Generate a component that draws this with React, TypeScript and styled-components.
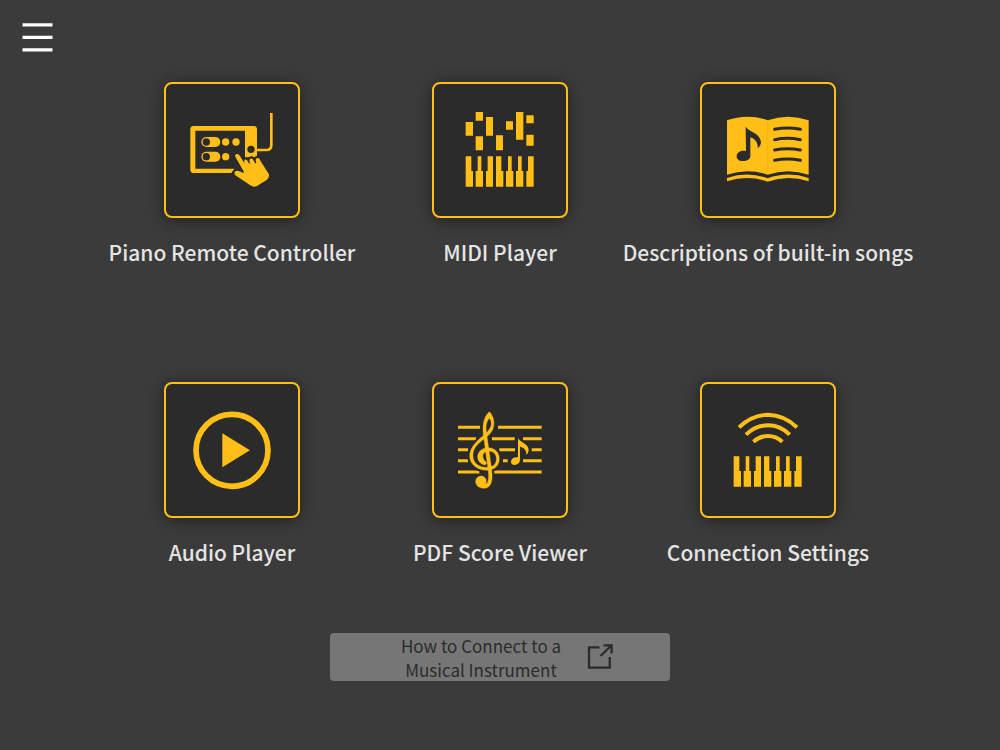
import React from "react";
import styled, { createGlobalStyle } from "styled-components";

const gold = "#ffbf16";
const panel = "#2b2b2b";

const GlobalStyle = createGlobalStyle`
  *, *::before, *::after { box-sizing: border-box; }
  html, body { margin: 0; min-height: 100%; background: #3b3b3b; }
  body { font-family: "Noto Sans CJK JP", "Noto Sans", sans-serif; font-weight: 500; }
`;

const Page = styled.div`
  display: flex;
  flex-direction: column;
  min-height: 100vh;
`;

const Header = styled.header`
  display: flex;
  padding: 22px 22px 30px;
`;

const MenuButton = styled.button`
  display: block;
  width: 31px;
  height: 30px;
  padding: 0;
  border: 0;
  background: none;
  cursor: pointer;
  svg { display: block; width: 100%; height: 100%; }
`;

const Grid = styled.main`
  display: grid;
  grid-template-columns: repeat(3, minmax(0, 1fr));
  row-gap: 114px;
  padding: 0 98px;
`;

const Entry = styled.button`
  display: flex;
  flex-direction: column;
  align-items: center;
  gap: 18px;
  padding: 0;
  border: 0;
  background: none;
  font: inherit;
  color: #e4e4e4;
  cursor: pointer;
`;

const Tile = styled.span`
  display: block;
  width: 136px;
  height: 136px;
  border: 2px solid ${gold};
  border-radius: 8px;
  background: ${panel};
  box-shadow: 0 2px 16px rgba(0, 0, 0, 0.45);
  svg { display: block; width: 100%; height: 100%; }
`;

const Label = styled.span`
  font-size: 21px;
  line-height: 32px;
  white-space: nowrap;
`;

const Footer = styled.footer`
  display: flex;
  justify-content: center;
  padding: 65px 0 64px;
`;

const HelpLink = styled.a`
  display: flex;
  align-items: flex-end;
  justify-content: center;
  gap: 26px;
  width: 34%;
  min-width: 300px;
  height: 48px;
  padding-left: 14px;
  border-radius: 4px;
  background: #767676;
  color: #2b2b2b;
  font-size: 17px;
  font-weight: 400;
  line-height: 24px;
  text-align: center;
  text-decoration: none;
  svg { display: block; width: 26px; height: 26px; align-self: center; }
`;

const HelpText = styled.span`
  padding-top: 1px;
  margin-bottom: -1px;
`;

const RemoteIcon = () => (
  <svg viewBox="48 42 396 396" aria-hidden="true">
    <path d="M364 129V225Q364 240 349 240H318" fill="none" stroke={gold} strokeWidth="8" />
    <path
      fillRule="evenodd"
      fill={gold}
      d="M131 168H311Q321 168 321 178V262H285V182H136V296H254L244 309H131Q121 309 121 299V178Q121 168 131 168Z"
    />
    <circle cx="303" cy="238" r="11" fill={panel} />
    {[216, 260].map((y) => (
      <g key={y}>
        <rect x="154" y={y - 15} width="57" height="30" rx="15" fill={gold} />
        <circle cx="169" cy={y} r="11" fill={panel} />
        <circle cx="227" cy={y} r="11" fill={gold} />
      </g>
    ))}
    <circle cx="258" cy="216" r="11" fill={gold} />
    <path
      d="M256 260Q254 253 260 252Q266 251 270 258L284 281C281 273 283 268 288 269Q292 269 296 279C298 283 301 281 299 276C296 267 303 263 308 267L315 279C317 282 320 280 318 275C315 266 321 262 326 265Q329 267 332 274L356 311Q360 322 350 330L321 348Q311 353 301 346L256 316Q251 309 256 304Q261 300 268 304L280 309Q283 308 280 302Z"
      fill={gold}
      stroke={panel}
      strokeWidth="13"
      strokeLinejoin="round"
      paintOrder="stroke"
    />
  </svg>
);

const Keys = ({ x }: { x: number }) => (
  <g fill={gold} transform={`translate(${x} 259)`}>
    <path d="M0 0H17V44H22V91H0ZM36 0H47V44H52V91H30V44H36ZM66 0H82V91H61V44H66ZM91 0H107V44H113V91H91ZM127 0H138V44H143V91H121V44H127ZM157 0H168V44H173V91H151V44H157ZM187 0H204V91H182V44H187Z" />
  </g>
);

const MidiIcon = () => (
  <svg viewBox="42 42 396 396" aria-hidden="true">
    <path
      fill={gold}
      d="M137 156h22v41h-22zM167 126h22v26h-22zM167 199h22v42h-22zM198 141h21v56h-21zM228 196h21v45h-21zM258 154h21v25h-21zM288 126h22v83h-22zM319 136h22v24h-22zM319 194h22v33h-22z"
    />
    <Keys x={137} />
  </svg>
);

const BookIcon = () => (
  <svg viewBox="36 42 396 396" aria-hidden="true">
    <path d="M111 151Q173 129 233 151Q294 129 356 151V314Q294 293 233 314Q173 293 111 314Z" fill={gold} />
    <path d="M111 324Q173 303 233 325Q294 303 356 324V334Q294 314 233 335Q173 314 111 334Z" fill={gold} />
    <path d="M233 152V314" stroke="#efb118" strokeWidth="2" />
    <g fill="none" stroke={panel} strokeWidth="9" strokeLinecap="round">
      <path d="M254 178Q292 170 331 178M254 209Q292 201 331 209M254 240Q292 232 331 240M254 271Q292 263 331 271" />
    </g>
    <path
      fill={panel}
      d="M167 170C175 184 213 190 213 218Q212 229 203 235C205 213 190 205 181 202V257C181 268 169 274 158 273C146 273 139 266 140 257C141 247 154 240 168 243Z"
    />
  </svg>
);

const PlayIcon = () => (
  <svg viewBox="48 42 396 396" aria-hidden="true">
    <circle cx="246" cy="241" r="108" fill="none" stroke={gold} strokeWidth="17" />
    <path d="M217 190L300 241L217 292Z" fill={gold} />
  </svg>
);

const clef =
  "M208 125C224 141 225 165 217 181C209 196 195 204 180 217C164 231 158 243 159 260C160 280 180 293 203 292C222 291 230 279 229 265C228 251 219 243 206 244C193 244 187 253 189 263Q191 271 199 277Q201 282 195 285C181 283 172 272 173 258C175 243 187 234 204 233C224 233 237 246 238 265C238 287 224 300 201 301C172 301 150 284 149 259C149 237 163 221 181 204C197 191 212 179 214 162Q214 151 208 144C199 155 197 170 199 185L214 291C218 321 218 340 206 350C192 360 169 354 167 337C166 325 174 318 184 318C196 319 201 329 198 340L197 343C207 336 207 322 204 296L190 194C187 167 190 141 208 125Z";
const smallNote =
  "M294 204C299 217 326 221 326 240Q326 249 319 255C321 240 310 232 300 230V268C300 279 292 285 284 285C276 285 272 280 273 274C274 265 284 260 294 262Z";

const ScoreIcon = () => (
  <svg viewBox="42 42 396 396" aria-hidden="true">
    <path
      d="M114 172H180M234 172H365M114 206H168M216 206H284M309 206H365M114 239H144M238 239H285M335 239H365M114 272H144M249 272H263M309 272H365M114 306H178M222 306H365"
      stroke={gold}
      strokeWidth="9"
    />
    <g fill={panel} stroke={panel} strokeWidth="14" strokeLinejoin="round">
      <path d={clef} />
      <path d={smallNote} />
    </g>
    <g fill={gold}>
      <path d={clef} stroke={gold} strokeWidth="1" />
      <path d={smallNote} />
    </g>
  </svg>
);

const ConnectionIcon = () => (
  <svg viewBox="36 42 396 396" aria-hidden="true">
    <path
      d="M147 172Q185 135 234 134Q283 135 321 172M168 194Q197 166 234 166Q271 166 299 194M190 215Q210 198 234 198Q258 198 277 215"
      fill="none"
      stroke={gold}
      strokeWidth="12"
    />
    <Keys x={131} />
  </svg>
);

const entries = [
  { label: "Piano Remote Controller", Icon: RemoteIcon },
  { label: "MIDI Player", Icon: MidiIcon },
  { label: "Descriptions of built-in songs", Icon: BookIcon },
  { label: "Audio Player", Icon: PlayIcon },
  { label: "PDF Score Viewer", Icon: ScoreIcon },
  { label: "Connection Settings", Icon: ConnectionIcon },
];

export default function App() {
  return (
    <Page>
      <GlobalStyle />
      <Header>
        <MenuButton type="button" aria-label="Menu">
          <svg viewBox="0 0 31 30" fill="#fff" aria-hidden="true">
            <path d="M.5 1.2h30v3.3H.5zM.5 13.7h30V17H.5zM.5 26.2h30v3.3H.5z" />
          </svg>
        </MenuButton>
      </Header>
      <Grid>
        {entries.map(({ label, Icon }) => (
          <Entry type="button" key={label}>
            <Tile>
              <Icon />
            </Tile>
            <Label>{label}</Label>
          </Entry>
        ))}
      </Grid>
      <Footer>
        <HelpLink href="#connect">
          <HelpText>
            How to Connect to a<br />
            Musical Instrument
          </HelpText>
          <svg viewBox="0 0 26 26" fill="none" stroke="#2b2b2b" strokeWidth="2.3" aria-hidden="true">
            <path d="M12.5 3.3H2V23.7H22.7V13M13.5 12L24 1.8M16.5 1.4H24.6V9.5" />
          </svg>
        </HelpLink>
      </Footer>
    </Page>
  );
}
